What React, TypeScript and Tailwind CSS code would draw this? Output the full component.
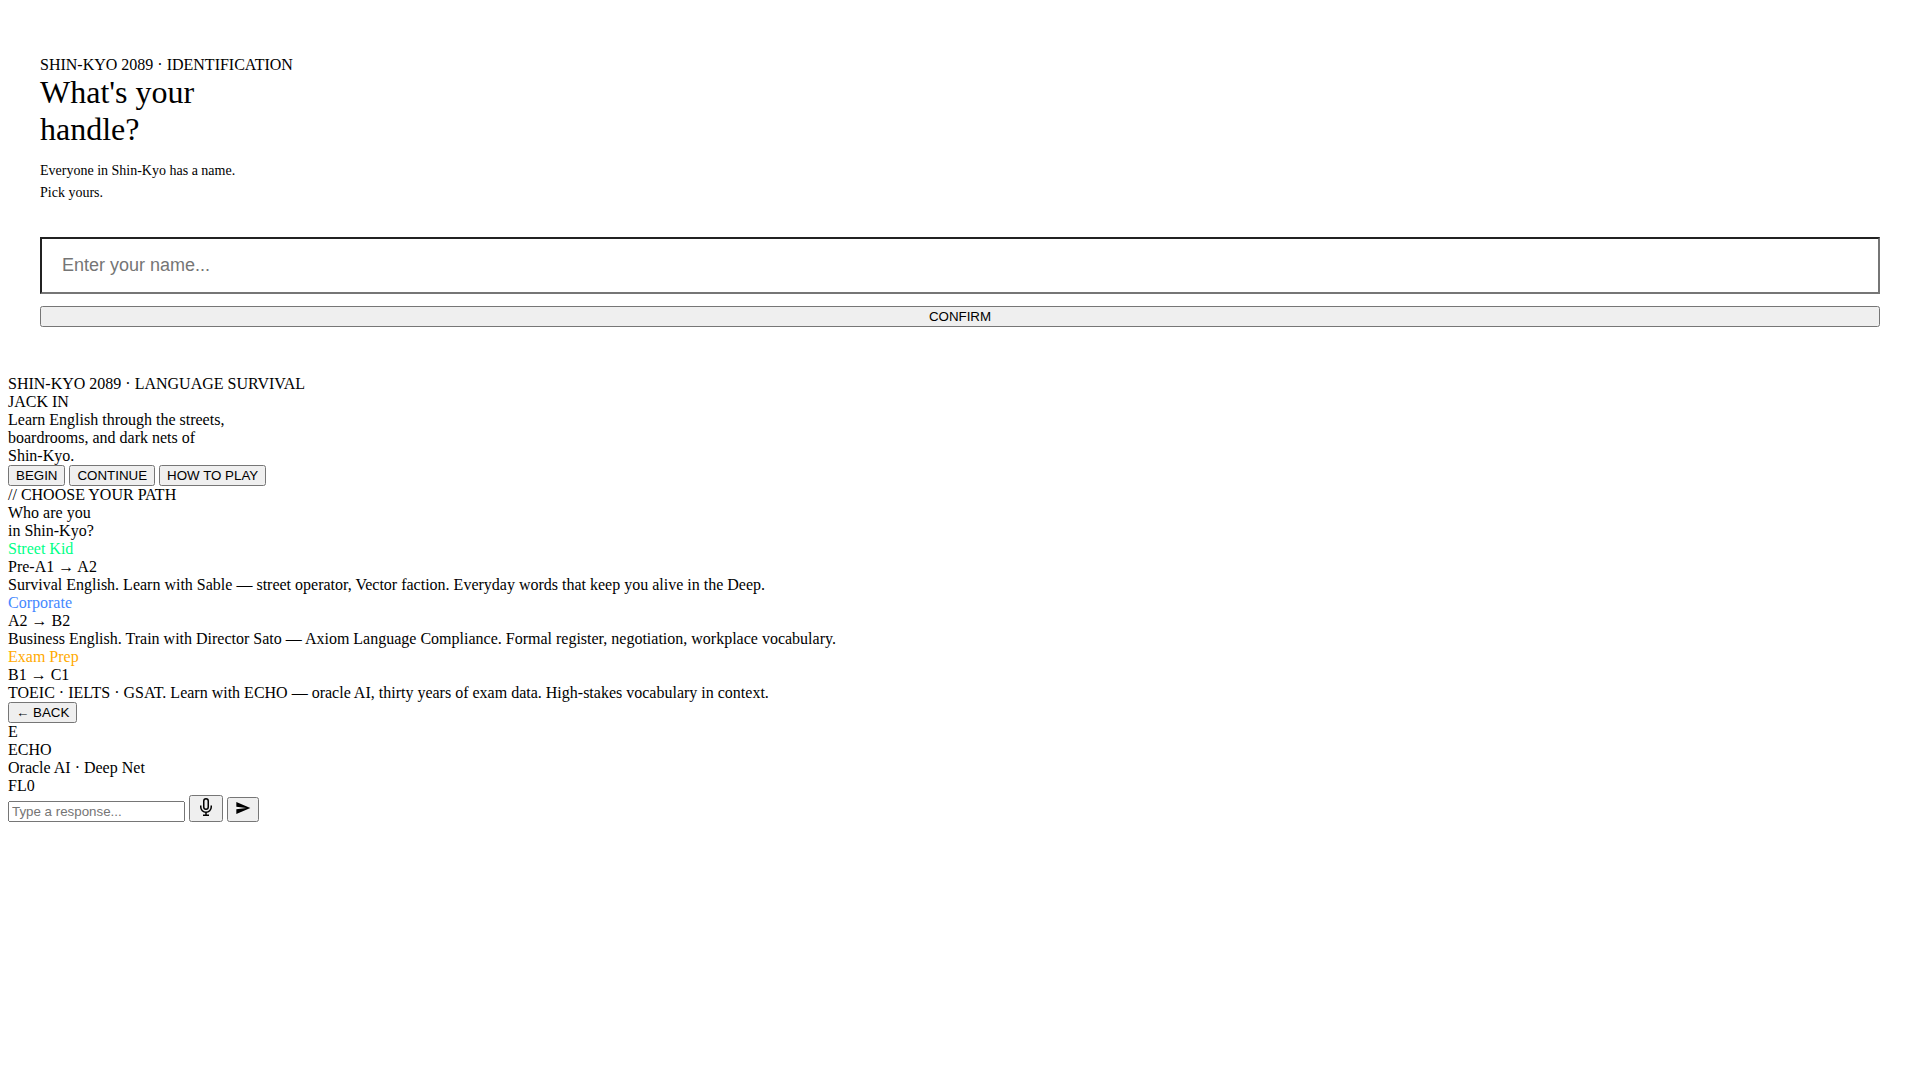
import type { ButtonHTMLAttributes } from "react";

const paths = [
  {
    name: "Street Kid",
    color: "text-[#00ff88]",
    level: "Pre-A1 → A2",
    text: "Survival English. Learn with Sable — street operator, Vector faction. Everyday words that keep you alive in the Deep.",
  },
  {
    name: "Corporate",
    color: "text-[#4488ff]",
    level: "A2 → B2",
    text: "Business English. Train with Director Sato — Axiom Language Compliance. Formal register, negotiation, workplace vocabulary.",
  },
  {
    name: "Exam Prep",
    color: "text-[#ffaa00]",
    level: "B1 → C1",
    text: "TOEIC · IELTS · GSAT. Learn with ECHO — oracle AI, thirty years of exam data. High-stakes vocabulary in context.",
  },
];

// Buttons and the chat box keep the browser's native look.
function NativeButton(props: ButtonHTMLAttributes<HTMLButtonElement>) {
  return <button type="button" className="[all:revert]" {...props} />;
}

function Identification() {
  return (
    <section className="flex flex-col px-8 py-12">
      <div>SHIN-KYO 2089 · IDENTIFICATION</div>
      <h1 className="text-[32px] leading-[37px]">
        What's your
        <br />
        handle?
      </h1>
      <p className="mt-3 mb-[33px] text-[14px] leading-[22px]">
        Everyone in Shin-Kyo has a name.
        <br />
        Pick yours.
      </p>
      <input
        type="text"
        aria-label="Your name"
        placeholder="Enter your name..."
        className="mb-3 w-full border-2 [border-style:inset] border-[#767676] bg-white px-5 py-4 font-['Liberation_Sans',Arial,sans-serif] text-[18px] leading-[21px] placeholder:text-[#757575]"
      />
      <NativeButton>CONFIRM</NativeButton>
    </section>
  );
}

function Title() {
  return (
    <section>
      <div>SHIN-KYO 2089 · LANGUAGE SURVIVAL</div>
      <h2>JACK IN</h2>
      <p>
        Learn English through the streets,
        <br />
        boardrooms, and dark nets of
        <br />
        Shin-Kyo.
      </p>
      <div className="flex gap-1">
        <NativeButton>BEGIN</NativeButton>
        <NativeButton>CONTINUE</NativeButton>
        <NativeButton>HOW TO PLAY</NativeButton>
      </div>
    </section>
  );
}

function ChoosePath() {
  return (
    <section>
      <div>// CHOOSE YOUR PATH</div>
      <h2>
        Who are you
        <br />
        in Shin-Kyo?
      </h2>
      {paths.map((p) => (
        <article key={p.name}>
          <h3 className={p.color}>{p.name}</h3>
          <div>{p.level}</div>
          <p>{p.text}</p>
        </article>
      ))}
      <div className="flex">
        <NativeButton>← BACK</NativeButton>
      </div>
    </section>
  );
}

function Chat() {
  return (
    <section>
      <div>E</div>
      <div>ECHO</div>
      <div>Oracle AI · Deep Net</div>
      <div>FL0</div>
      <form className="flex items-end gap-1" onSubmit={(e) => e.preventDefault()}>
        <input
          type="text"
          aria-label="Response"
          placeholder="Type a response..."
          className="[all:revert] box-border! w-[177px]! placeholder:text-[#757575]"
        />
        <NativeButton aria-label="Speak">
          <svg
            className="inline align-baseline"
            width="18"
            height="18"
            viewBox="0 0 24 24"
            fill="none"
            stroke="currentColor"
            strokeWidth="2"
          >
            <path d="M12 1a3 3 0 0 0-3 3v8a3 3 0 0 0 6 0V4a3 3 0 0 0-3-3z" />
            <path d="M19 10v2a7 7 0 0 1-14 0v-2" />
            <path d="M12 19v4M8 23h8" />
          </svg>
        </NativeButton>
        <NativeButton aria-label="Send">
          <svg className="inline align-baseline" width="16" height="16" viewBox="0 0 24 24" fill="currentColor">
            <path d="M2.01 21L23 12 2.01 3 2 10l15 2-15 2z" />
          </svg>
        </NativeButton>
      </form>
    </section>
  );
}

export default function App() {
  return (
    <main className="bg-white p-2 font-['Liberation_Serif','Times_New_Roman',serif] text-[16px] leading-[18px] text-black">
      <Identification />
      <Title />
      <ChoosePath />
      <Chat />
    </main>
  );
}
